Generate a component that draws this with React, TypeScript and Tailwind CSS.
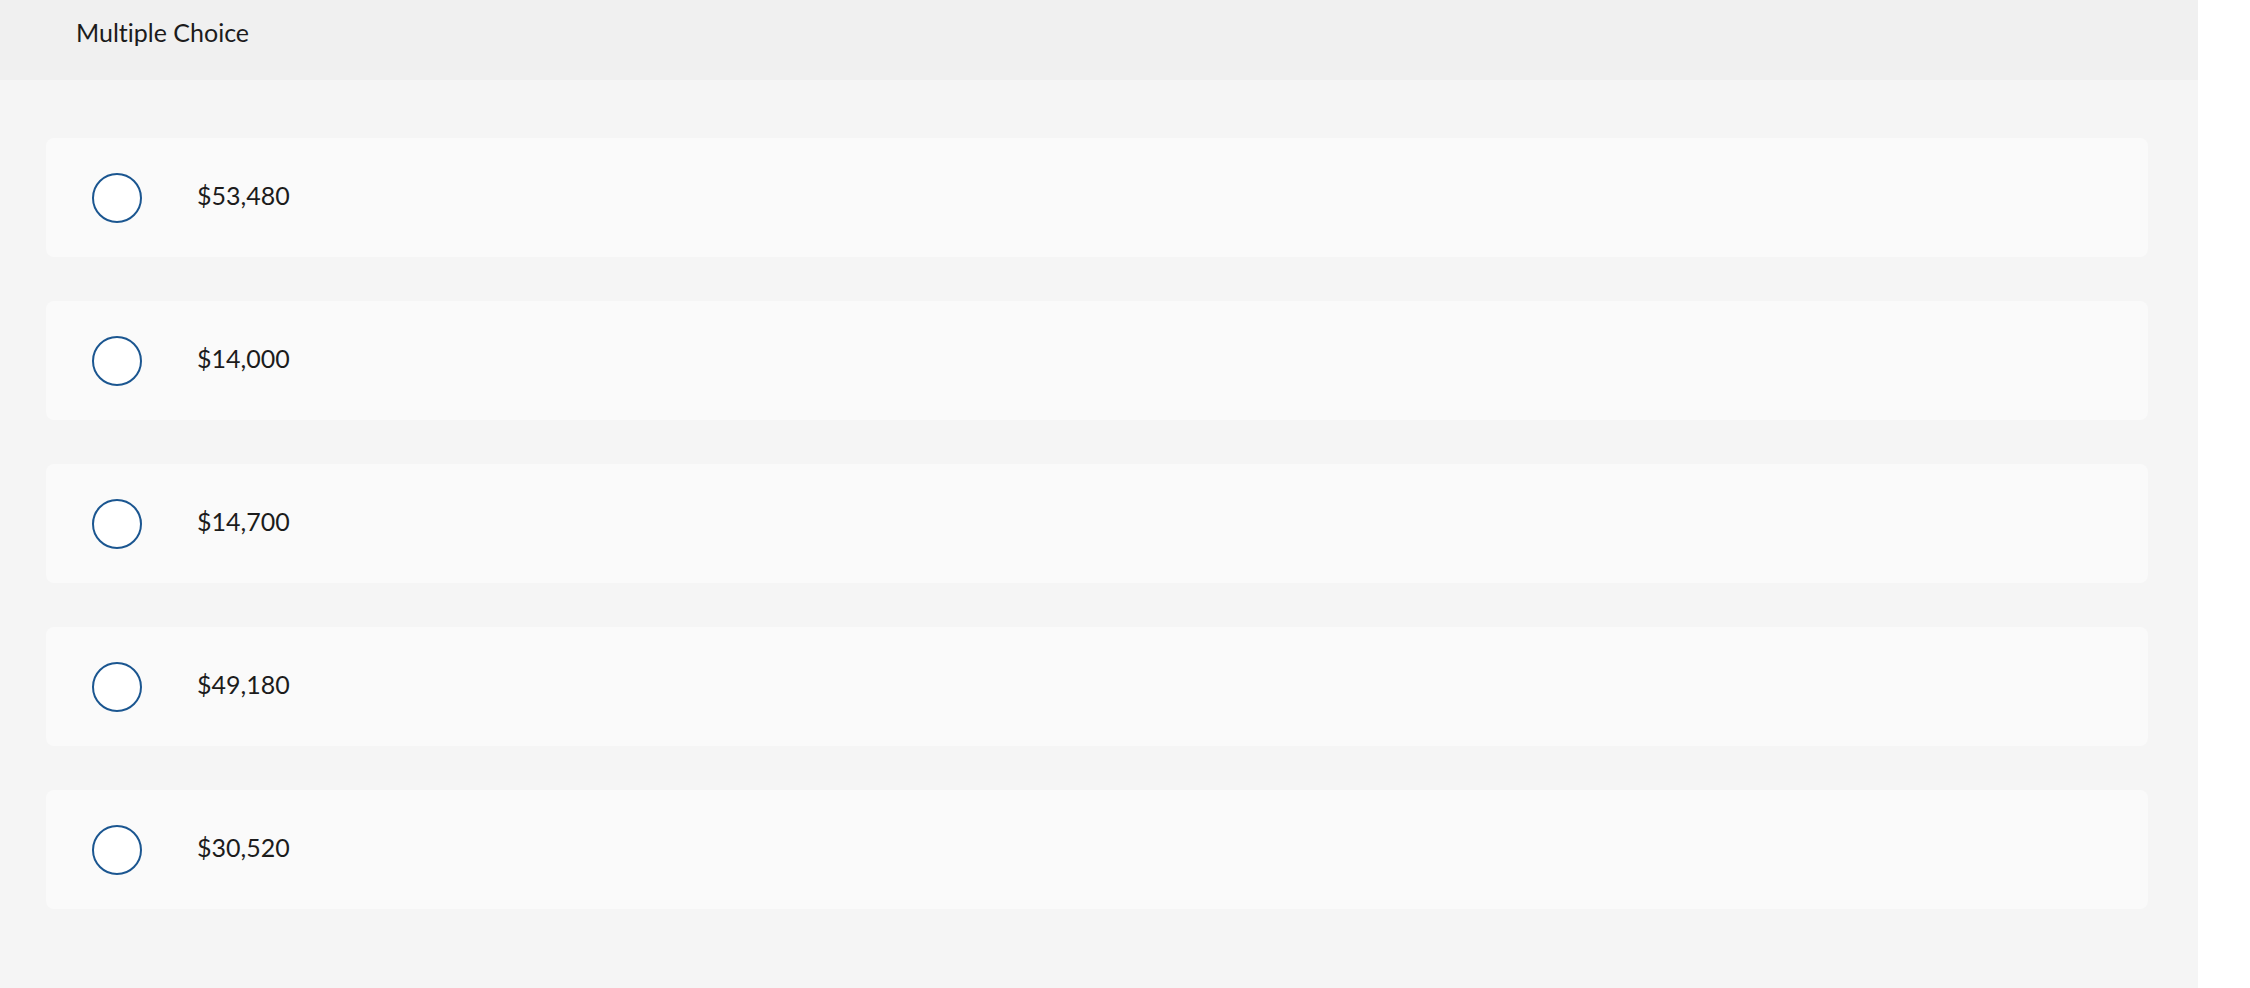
const choices = ["$53,480", "$14,000", "$14,700", "$49,180", "$30,520"]

export default function App() {
    return (
        <div className="w-[2250px] h-[988px] bg-white font-['Lato','Open_Sans',sans-serif] text-[#1c1c1c] [font-variant-ligatures:none]">
            <div className="w-[2198px] h-full bg-[#f5f5f5] flex flex-col">
                <div className="h-[80px] bg-[#f0f0f0] pl-[76px] pt-[15px]">
                    <h2 className="text-[25px] leading-[34px]">Multiple Choice</h2>
                </div>
                <div className="flex flex-col gap-[44px] pt-[58px] pl-[46px] pr-[50px]">
                    {choices.map((c) => (
                        <label
                            key={c}
                            className="h-[119px] flex items-center bg-[#fafafa] rounded-lg pl-[46px] cursor-pointer">
                            <span className="w-[50px] h-[50px] rounded-full border-2 border-[#1b5690] bg-white shrink-0"></span>
                            <span className="ml-[55px] mb-[5px] text-[25px] leading-none">{c}</span>
                        </label>
                    ))}
                </div>
            </div>
        </div>
    )
}
